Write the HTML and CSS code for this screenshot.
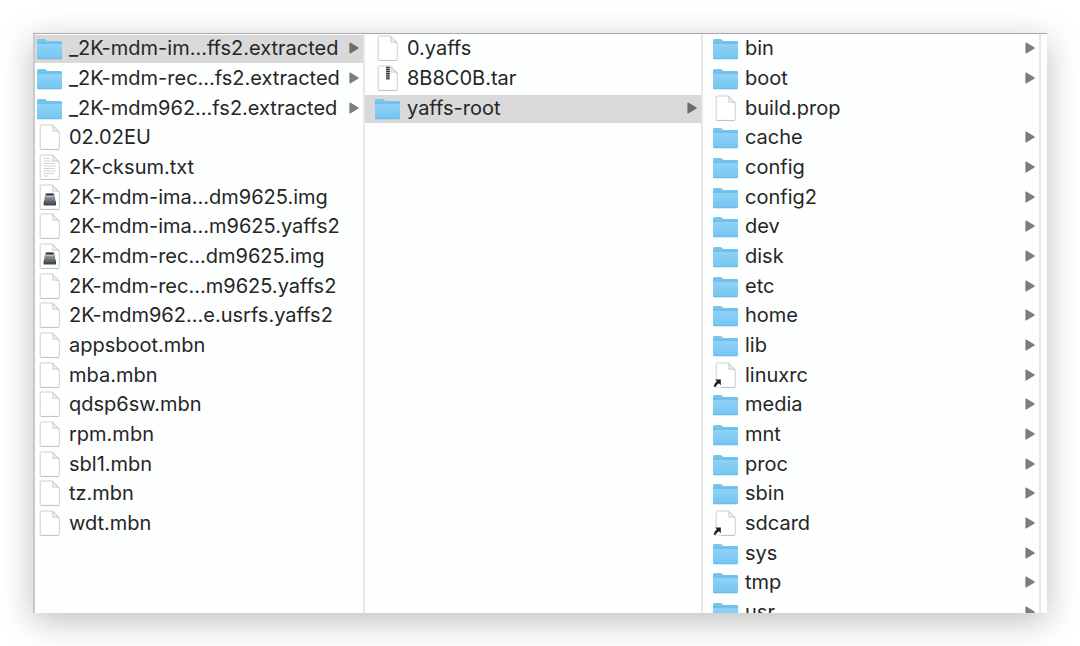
FILE: index.html
```
<!DOCTYPE html>
<html lang="en">
<head>
<meta charset="utf-8">
<meta name="viewport" content="width=device-width, initial-scale=1">
<title>Files</title>
<link rel="stylesheet" href="styles.css">
</head>
<body>
<svg class="sprite" aria-hidden="true">
  <defs>
    <linearGradient id="blue" x1="0" y1="0" x2="0" y2="1">
      <stop offset="0" stop-color="#8fd3f7"/><stop offset="1" stop-color="#76c5f2"/>
    </linearGradient>
    <linearGradient id="metal" x1="0" y1="0" x2="0" y2="1">
      <stop offset="0" stop-color="#b4bec6"/><stop offset="1" stop-color="#596269"/>
    </linearGradient>
    <symbol id="folder" viewBox="0 0 25 26">
      <g transform="translate(0 .6)">
      <path d="M0 22.5V5.3Q0 3.6 1.6 3.6H7.2Q8.2 3.6 9 4.4L10 5.4H23.4Q25 5.4 25 7V22.5Q25 23.7 23.8 23.7H1.2Q0 23.7 0 22.5Z" fill="#65b4e2"/>
      <path d="M0 8V5.3Q0 3.6 1.6 3.6H7.2Q8.2 3.6 9 4.4L10 5.4H23.4Q25 5.4 25 7V8Z" fill="#76c5ee"/>
      <path d="M0 8H25V21.8Q25 22.8 24 22.8H1Q0 22.8 0 21.8Z" fill="url(#blue)"/>
      <path d="M0 7.5H25" stroke="#66b6e2" stroke-width=".8"/>
      </g>
    </symbol>
    <symbol id="page" viewBox="0 0 25 26">
      <path d="M4.3 1H15.4L22.3 7.9V24.3Q22.3 25.4 21.2 25.4H4.3Q3.2 25.4 3.2 24.3V2.1Q3.2 1 4.3 1Z" fill="#fff" stroke="#cbcbcb" stroke-width=".9"/>
      <path d="M3.6 25.5H22" stroke="#bcbcbc" stroke-width=".7"/>
      <path d="M15.4 1.2Q16.6 4 15.7 7.2Q19 6.5 22.1 8L15.4 1.2Z" fill="#f1f1f1" stroke="#c4c4c4" stroke-width=".8"/>
    </symbol>
    <symbol id="text" viewBox="0 0 25 26">
      <use href="#page"/>
      <path d="M6.5 4.5H13M6.5 7H14M6.5 9.5H18M6.5 12H19M6.5 14.5H18M6.5 17H19M6.5 19.5H17M6.5 22H11" stroke="#d4d4d4" stroke-width="1"/>
    </symbol>
    <symbol id="image" viewBox="0 0 25 26">
      <use href="#page"/>
      <path d="M8.4 9H17.2L18.8 18.5H6.8Z" fill="url(#metal)"/>
      <path d="M9.2 9.6H16.4V11.6H9.2Z" fill="#263345"/>
      <path d="M9 12.2H16.6" stroke="#d3dae0" stroke-width=".8"/>
      <rect x="6.6" y="17.4" width="12.4" height="4.2" rx=".7" fill="#45494c"/>
      <path d="M7.5 18.5H18" stroke="#7c8388" stroke-width=".6"/>
    </symbol>
    <symbol id="archive" viewBox="0 0 25 26">
      <use href="#page"/>
      <path d="M11 1.4H14.8V14.4H11Z" fill="#a5a8aa"/>
      <path d="M11.2 2.5H14.6M11.2 4.5H14.6M11.2 6.5H14.6M11.2 8.5H14.6" stroke="#25282a" stroke-width="1.2"/>
      <path d="M11.4 9.8H14.4V14.4H11.4Z" fill="#3a3e41"/>
      <path d="M12.9 10.6V13.4" stroke="#c5c7c8" stroke-width=".8"/>
    </symbol>
    <symbol id="alias" viewBox="0 0 25 26">
      <use href="#page"/>
      <path d="M0 17H8V25.5H0Z" fill="#fff"/>
      <path d="M2 17.4H7.8V23.2L5.9 21.3Q3.3 22.7 2.4 25.2L.6 24.2Q1.2 21.2 3.9 19.3Z" fill="#1c1c1c"/>
    </symbol>
    <symbol id="more" viewBox="0 0 10 12">
      <path d="M1 1.1L9.2 6L1 10.9Z" fill="currentColor" stroke="currentColor" stroke-width="1.2" stroke-linejoin="round"/>
    </symbol>
  </defs>
</svg>
<main class="browser" id="browser"></main>
<script src="app.js"></script>
</body>
</html>
```
FILE: styles.css
```
* {
  box-sizing: border-box;
}

body {
  margin: 0;
  padding: 33px;
  height: 100vh;
  background: #fff;
  color: #262626;
  font-family: Inter, "Liberation Sans", sans-serif;
}

.sprite {
  position: absolute;
  width: 0;
  height: 0;
}

.browser {
  display: grid;
  grid-template-columns: 330fr 338fr 338fr 6px;
  height: 100%;
  overflow: hidden;
  background: #fdfefe;
  border-top: 1px solid #a9a9a9;
  border-left: 2px solid #c9caca;
  box-shadow: 0 8px 32px rgba(0, 0, 0, 0.26);
}

.column {
  display: grid;
  grid-auto-rows: 30px 30px 29px;
  align-content: start;
  min-width: 0;
  min-height: 0;
  margin: 0;
  padding: 1px 0 0;
  list-style: none;
  border-right: 2px solid #e6e7e7;
}

.row {
  display: flex;
  align-items: center;
  gap: 7px;
  width: 100%;
  height: 28px;
  margin: 0;
  padding: 0 4px 2px 10px;
  border: 0;
  background: none;
  color: inherit;
  font: inherit;
  font-size: 20px;
  line-height: 26px;
  text-align: left;
}

.column:first-child .row {
  padding-left: 2px;
}

.row.selected {
  background: #d9d9d9;
}

.icon {
  flex: none;
  width: 25px;
  height: 26px;
}

.name {
  flex: 1;
  min-width: 0;
  white-space: nowrap;
}

.more {
  flex: none;
  width: 10px;
  height: 12px;
  color: #7c7d7e;
}

.selected .more {
  color: #6b6c6d;
}
```
FILE: app.js
```
const columns = [
  [
    ["folder", "_2K-mdm-im…ffs2.extracted", true, true],
    ["folder", "_2K-mdm-rec…fs2.extracted", true],
    ["folder", "_2K-mdm962…fs2.extracted", true],
    ["page", "02.02EU"],
    ["text", "2K-cksum.txt"],
    ["image", "2K-mdm-ima…dm9625.img"],
    ["page", "2K-mdm-ima…m9625.yaffs2"],
    ["image", "2K-mdm-rec…dm9625.img"],
    ["page", "2K-mdm-rec…m9625.yaffs2"],
    ["page", "2K-mdm962…e.usrfs.yaffs2"],
    ["page", "appsboot.mbn"],
    ["page", "mba.mbn"],
    ["page", "qdsp6sw.mbn"],
    ["page", "rpm.mbn"],
    ["page", "sbl1.mbn"],
    ["page", "tz.mbn"],
    ["page", "wdt.mbn"]
  ],
  [
    ["page", "0.yaffs"],
    ["archive", "8B8C0B.tar"],
    ["folder", "yaffs-root", true, true]
  ],
  [
    ["folder", "bin", true],
    ["folder", "boot", true],
    ["page", "build.prop"],
    ["folder", "cache", true],
    ["folder", "config", true],
    ["folder", "config2", true],
    ["folder", "dev", true],
    ["folder", "disk", true],
    ["folder", "etc", true],
    ["folder", "home", true],
    ["folder", "lib", true],
    ["alias", "linuxrc", true],
    ["folder", "media", true],
    ["folder", "mnt", true],
    ["folder", "proc", true],
    ["folder", "sbin", true],
    ["alias", "sdcard", true],
    ["folder", "sys", true],
    ["folder", "tmp", true],
    ["folder", "usr", true]
  ]
];

const row = ([icon, name, more, selected]) => `
  <li><button type="button" class="row${selected ? " selected" : ""}">
    <svg class="icon" aria-hidden="true"><use href="#${icon}"/></svg>
    <span class="name">${name}</span>
    ${more ? '<svg class="more" aria-hidden="true"><use href="#more"/></svg>' : ""}
  </button></li>`;

document.getElementById("browser").innerHTML = columns
  .map(rows => `<ul class="column">${rows.map(row).join("")}</ul>`)
  .join("");
```
